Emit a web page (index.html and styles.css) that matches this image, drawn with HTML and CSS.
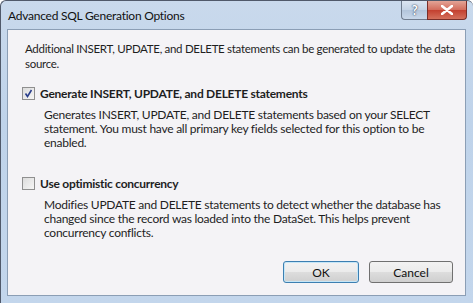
FILE: index.html
```html
<!DOCTYPE html>
<html lang="en">
<head>
  <meta charset="UTF-8" />
  <title>Advanced SQL Generation Options</title>
  <link rel="stylesheet" href="styles.css">
</head>
<body>
  <div class="window">
    <div class="titlebar">
      <span class="title">Advanced SQL Generation Options</span>
      <div class="caption-buttons">
        <div class="cap-btn help">?</div>
        <div class="cap-btn close">
          <svg width="12" height="10" viewBox="0 0 12 10"><path d="M1 1 L11 9 M11 1 L1 9" stroke="#fff" stroke-width="2.6" stroke-linecap="round"/></svg>
        </div>
      </div>
    </div>

    <div class="client">
      <p class="intro">Additional INSERT, UPDATE, and DELETE statements can be generated to update the data<br>source.</p>

      <div class="option first">
        <label class="check-row">
          <span class="checkbox checked">
            <svg width="9" height="9" viewBox="0 0 9 9"><path d="M1.5 4.5 L3.5 7.5 L7.5 1" fill="none" stroke="#2b3f8c" stroke-width="1.6"/></svg>
          </span>
          <span class="check-label">Generate INSERT, UPDATE, and DELETE statements</span>
        </label>
        <p class="desc">Generates INSERT, UPDATE, and DELETE statements based on your SELECT statement. You must have all primary key fields selected for this option to be enabled.</p>
      </div>

      <div class="option">
        <label class="check-row">
          <span class="checkbox"></span>
          <span class="check-label">Use optimistic concurrency</span>
        </label>
        <p class="desc">Modifies UPDATE and DELETE statements to detect whether the database has changed since the record was loaded into the DataSet. This helps prevent concurrency conflicts.</p>
      </div>

      <div class="buttons">
        <button class="btn ok default">OK</button>
        <button class="btn cancel">Cancel</button>
      </div>
    </div>
  </div>
</body>
</html>
```
FILE: styles.css
```css
* {
  box-sizing: border-box;
}
body {
  margin: 0;
  font-family: Lato, 'Open Sans', sans-serif;
  font-size: 12px;
  letter-spacing: -0.25px;
  color: #1e1e1e;
}

/* === Window frame === */
.window {
  width: 473px;
  height: 303px;
  display: flex;
  flex-direction: column;
  border: 1px solid #50596a;
  border-bottom: none;
  border-right: none;
  border-radius: 6px 6px 0 0;
  background: linear-gradient(to bottom, #c9d9ec, #bfd3ea 40%, #c3d6ec);
  overflow: hidden;
}
.titlebar {
  height: 28px;
  display: flex;
  align-items: flex-start;
  padding-left: 7px;
}
.title {
  margin-top: 7px;
  color: #111;
}
.caption-buttons {
  margin-left: auto;
  margin-right: 6px;
  display: flex;
}
.cap-btn {
  height: 19px;
  display: flex;
  align-items: center;
  justify-content: center;
  border: 1px solid #6f7c8e;
  border-top: none;
}
.help {
  width: 26px;
  border-radius: 0 0 0 4px;
  border-right: none;
  background: linear-gradient(to bottom, #dbe5f1, #c4d3e5 50%, #b3c5db 51%, #c9d8ea);
  color: #fff;
  font-weight: bold;
  font-size: 13px;
  text-shadow: 0 0 2px #3b4a60, 0 0 1px #3b4a60;
}
.close {
  width: 40px;
  border-radius: 0 0 4px 0;
  background: linear-gradient(to bottom, #e3a496, #d26b5b 50%, #c3402f 51%, #d4705c);
  border-color: #7a2e28;
}

/* === Client area === */
.client {
  flex: 1;
  min-width: 0;
  margin: 0 7px 7px 6px;
  border: 1px solid #8b9eb5;
  background: #f4f3f6;
  padding: 11px 2px 12px 14px;
  display: flex;
  flex-direction: column;
}
.intro {
  margin: 0 0 0 3px;
  line-height: 15px;
  font-size: 11.5px;
  letter-spacing: -0.3px;
}
.option {
  margin-top: 26px;
}
.option.first {
  margin-top: 15px;
}
.check-row {
  display: flex;
  align-items: center;
  gap: 5px;
  line-height: 15px;
}
.checkbox {
  width: 13px;
  height: 13px;
  border: 1px solid #8f8f8f;
  background: linear-gradient(to bottom right, #dcdcdc, #f6f6f6);
  display: flex;
  align-items: center;
  justify-content: center;
}
.check-label {
  font-weight: bold;
}
.desc {
  margin: 7px 16px 0 22px;
  line-height: 14px;
}
.buttons {
  margin-top: auto;
  margin-right: 10px;
  display: flex;
  justify-content: flex-end;
  gap: 10px;
}
.btn {
  height: 22px;
  font: inherit;
  color: #111;
  border: 1px solid #707070;
  border-radius: 3px;
  background: linear-gradient(to bottom, #f2f2f2, #ebebeb 50%, #dddddd 51%, #cfcfcf);
}
.btn.ok {
  width: 76px;
}
.btn.cancel {
  width: 84px;
}
.btn.default {
  border-color: #3c7fb1;
  box-shadow: inset 0 0 0 1px #c5e6f7;
}
```
